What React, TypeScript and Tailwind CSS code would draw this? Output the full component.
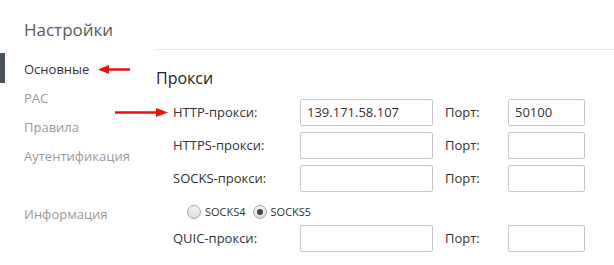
const font = { fontFamily: '"Open Sans", "Noto Sans", sans-serif' };

function Field({ value = "", w }: { value?: string; w: string }) {
  return (
    <div className={`${w} h-[27px] border border-[#c8c8c8] rounded-[2px] bg-white px-[6px] flex items-center text-[13px] text-[#333]`}>
      {value}
    </div>
  );
}

function ProxyRow({ label, host = "", port = "" }: { label: string; host?: string; port?: string }) {
  return (
    <div className="flex items-center h-[27px]">
      <div className="w-[127px] text-[13px] text-[#333]">{label}</div>
      <Field value={host} w="w-[133px]" />
      <div className="w-[75px] pl-[12px] text-[13px] text-[#333]">Порт:</div>
      <Field value={port} w="w-[77px]" />
    </div>
  );
}

function Radio({ checked }: { checked?: boolean }) {
  return (
    <span className="w-[14px] h-[14px] rounded-full border border-[#a8a8a8] bg-gradient-to-b from-[#f4f4f4] to-[#dcdcdc] flex items-center justify-center">
      {checked && <span className="w-[6px] h-[6px] rounded-full bg-[#444]" />}
    </span>
  );
}

export default function App() {
  const nav = ["Основные", "PAC", "Правила", "Аутентификация"];

  return (
    <div className="relative w-[614px] h-[265px] bg-white overflow-hidden" style={font}>
      {/* Title */}
      <div className="h-[49px] pl-[24px] pt-[17px] text-[17px] text-[#5a5a5a]">Настройки</div>

      <div className="flex">
        {/* Sidebar */}
        <div className="w-[155px] pt-[4px]">
          {nav.map((n, i) => (
            <div key={n} className="relative h-[29px] flex items-center pt-[4px] pl-[24px] text-[13px]">
              {i === 0 && <span className="absolute left-0 top-0 w-[5px] h-[30px] bg-[#4a525c]" />}
              <span className={i === 0 ? "text-[#333]" : "text-[#9a9a9a]"}>{n}</span>
            </div>
          ))}
          <div className="h-[29px] mt-[29px] flex items-center pt-[4px] pl-[24px] text-[13px] text-[#9a9a9a]">Информация</div>
        </div>

        {/* Main */}
        <div className="flex-1 border-t border-[#e6e6e6]">
          <div className="pl-[1px] pt-[16px] text-[16px] text-[#222]">Прокси</div>
          <div className="pl-[18px] mt-[9px] flex flex-col gap-[6px]">
            <ProxyRow label="HTTP-прокси:" host="139.171.58.107" port="50100" />
            <ProxyRow label="HTTPS-прокси:" />
            <ProxyRow label="SOCKS-прокси:" />
            <div className="flex items-center h-[21px] pt-[7px] pl-[14px] gap-[4px] text-[11px] text-[#333]">
              <Radio />
              <span className="mr-[3px]">SOCKS4</span>
              <Radio checked />
              <span>SOCKS5</span>
            </div>
            <ProxyRow label="QUIC-прокси:" />
          </div>
        </div>
      </div>

      {/* Red annotation arrows */}
      <svg className="absolute left-[98px] top-[64px]" width="34" height="11" viewBox="0 0 34 11">
        <path d="M32 5.5H9" stroke="#e81010" strokeWidth="2.5" />
        <path d="M0 5.5L11 1V10Z" fill="#e81010" />
      </svg>
      <svg className="absolute left-[114px] top-[107px]" width="54" height="11" viewBox="0 0 54 11">
        <path d="M1 5.5H44" stroke="#e81010" strokeWidth="2.5" />
        <path d="M54 5.5L42 1V10Z" fill="#e81010" />
      </svg>
    </div>
  );
}
